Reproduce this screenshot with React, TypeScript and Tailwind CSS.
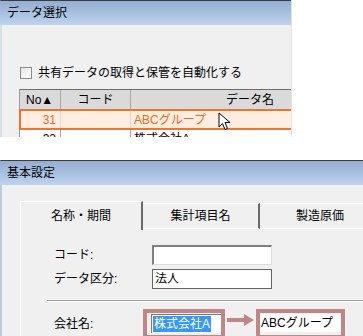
const font = "font-['Liberation_Sans','Noto_Sans_CJK_JP',sans-serif]"

function Cursor() {
  return (
    <svg width="14" height="20" viewBox="0 0 14 20" className="absolute left-[218px] top-[112px]">
      <path d="M1 1 L1 15 L4.5 11.5 L7 17.5 L9.5 16.5 L7 10.5 L12 10.5 Z" fill="#fff" stroke="#000" strokeWidth="1" strokeLinejoin="miter" />
    </svg>
  )
}

function TitleBar({ title }: { title: string }) {
  return (
    <>
      <div className="h-px shrink-0 bg-[#3c3c3c] rounded-tl-[3px]" />
      <div className="h-[24px] shrink-0 flex items-center pl-[7px] text-[12px] text-black bg-gradient-to-b from-[#93aed2] to-[#bdd4ee]">
        {title}
      </div>
    </>
  )
}

function DataSelect() {
  return (
    <div className="relative w-[292px] h-[137px] overflow-hidden flex flex-col border-r border-[#e4e4e4]">
      <TitleBar title="データ選択" />
      <div className="flex-1 min-h-0 bg-[#f0f0f0] border-l-2 border-[#d7dfea] pl-[17px]">
        {/* checkbox */}
        <div className="flex items-center gap-[6px] mt-[42px] ml-px h-[12px]">
          <div className="w-[12px] h-[12px] border border-[#8a8a8a] bg-gradient-to-br from-[#e6e6e6] to-white" />
          <span className="text-[12px] leading-none text-black">共有データの取得と保管を自動化する</span>
        </div>

        {/* table */}
        <div className="mt-[10px] w-[360px] border-l border-[#9a9a9a] text-[12px] leading-none">
          <div className="flex h-[20px] bg-[#dadada] border-t border-[#6c6c6c]">
            <div className="w-[41px] border-r border-[#a8a8a8] flex items-center pl-[6px]">No▲</div>
            <div className="w-[70px] border-r border-[#a8a8a8] flex items-center justify-center">コード</div>
            <div className="w-[238px] flex items-center justify-center">データ名</div>
          </div>
          <div className="flex h-[21px] bg-[#fdeee1] border-2 border-[#f4732a] -ml-px text-[#f26a24]">
            <div className="w-[40px] border-r border-[#e8d6c6] flex items-center justify-end pr-[4px]">31</div>
            <div className="w-[70px] border-r border-[#e8d6c6]" />
            <div className="flex-1 flex items-center pl-[3px]">ABCグループ</div>
          </div>
          <div className="flex h-[20px] bg-white text-black">
            <div className="w-[41px] border-r border-[#a8a8a8] flex items-start justify-end pr-[4px] pt-[3px]">32</div>
            <div className="w-[70px] border-r border-[#a8a8a8]" />
            <div className="flex-1 flex items-start pl-[3px] pt-[3px]">株式会社A</div>
          </div>
        </div>
      </div>
      <Cursor />
    </div>
  )
}

function Arrow() {
  return (
    <svg width="31" height="14" viewBox="0 0 31 14" className="mt-[4px] shrink-0">
      <path d="M2 5 L19 5 L19 1 L29 7 L19 13 L19 9 L2 9 Z" fill="#c08585" />
    </svg>
  )
}

function CompanyRow() {
  return (
    <div className="flex items-start mt-[7px]">
      <span className="w-[89px] shrink-0 pt-[9px]">会社名:</span>
      <div className="w-[82px] h-[30px] shrink-0 border-4 border-[#c08585] pl-[4px] pt-px">
        <div className="h-[19px] bg-white border-l border-t border-[#7a7a7a] flex items-center pl-px">
          <span className="bg-[#3399ff] text-white px-[1px] py-[2px]">株式会社A</span>
        </div>
      </div>
      <Arrow />
      <div className="w-[89px] h-[30px] shrink-0 border-4 border-[#c08585] pt-px">
        <div className="h-[18px] bg-white flex items-center pl-px">ABCグループ</div>
      </div>
    </div>
  )
}

function BasicSettings() {
  return (
    <div className="w-[363px] h-[176px] overflow-hidden flex flex-col">
      <TitleBar title="基本設定" />
      <div className="flex-1 min-h-0 bg-[#f0f0f0] border-l-2 border-[#b8cbe3] pl-[18px] pt-[16px] flex flex-col">
        {/* tabs */}
        <div className="flex shrink-0 items-end h-[29px] text-[12px] leading-none text-black">
          <div className="w-[123px] h-[29px] shrink-0 border-t border-l border-white border-r-2 border-r-[#6a6a6a] flex items-center justify-center pb-px">
            名称・期間
          </div>
          <div className="w-[117px] h-[26px] mb-px shrink-0 border-t border-b border-white border-r-2 border-r-[#6a6a6a] flex items-center justify-center">
            集計項目名
          </div>
          <div className="w-[120px] h-[26px] mb-px shrink-0 border-t border-b border-white flex items-center justify-center">
            製造原価
          </div>
        </div>

        {/* panel */}
        <div className="flex-1 shrink-0 border-l border-white pl-[33px] pt-[15px] text-[12px] leading-none text-black">
          <div className="flex items-center h-[20px]">
            <span className="w-[98px] shrink-0">コード:</span>
            <div className="w-[120px] h-[20px] bg-white border-t-2 border-l-2 border-t-[#808080] border-l-[#808080] border-b border-r border-b-[#dcdcdc] border-r-[#dcdcdc]" />
          </div>
          <div className="flex items-center h-[20px] mt-[4px]">
            <span className="w-[98px] shrink-0">データ区分:</span>
            <div className="w-[120px] h-[20px] bg-white border border-[#646464] flex items-center pl-[2px]">法人</div>
          </div>
          <div className="-ml-[7px] mt-[11px] h-[2px] border-t border-[#a0a0a0] border-b border-b-white" />
          <CompanyRow />
        </div>
      </div>
    </div>
  )
}

export default function App() {
  return (
    <div className={`w-[363px] h-[336px] overflow-hidden bg-white ${font}`}>
      <DataSelect />
      <div className="mt-[23px]">
        <BasicSettings />
      </div>
    </div>
  )
}
